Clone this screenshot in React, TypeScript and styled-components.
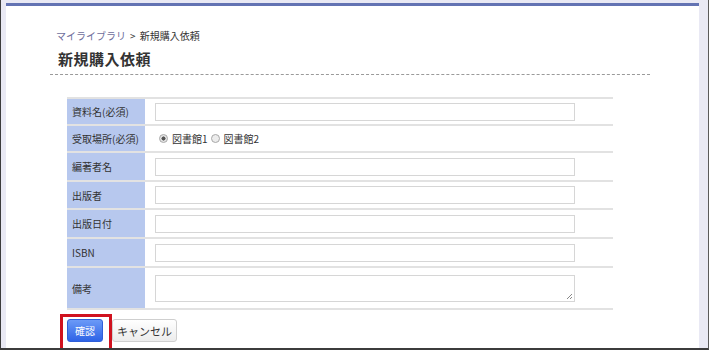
import styled, { createGlobalStyle } from "styled-components";

const GlobalStyle = createGlobalStyle`
  html, body {
    margin: 0;
    padding: 0;
    background: #ffffff;
  }
  body {
    font-family: "Noto Sans CJK JP", "Noto Sans", sans-serif;
    color: #333333;
  }
`;

const Frame = styled.div`
  width: 709px;
  height: 350px;
  box-sizing: border-box;
  border-left: 1px solid #3c3c3c;
  border-right: 1px solid #5a5a5a;
  border-bottom: 2px solid #3c3c3c;
  background: #e9e9f4;
  padding: 3px 9px 0 5px;
  overflow: hidden;
`;

const Panel = styled.div`
  height: 100%;
  box-sizing: border-box;
  background: #ffffff;
  border-top: 3px solid #6373b3;
  padding: 0 0 0 44px;
`;

const Header = styled.div`
  width: 600px;
  padding-top: 23px;
  border-bottom: 1px dashed #9a9a9a;
  padding-bottom: 5px;
`;

const Crumbs = styled.div`
  display: flex;
  align-items: center;
  gap: 4px;
  padding-left: 6px;
  font-size: 10px;
  line-height: 14px;
`;

const CrumbLink = styled.span`
  color: #6d6d9c;
`;

const CrumbCurrent = styled.span`
  color: #333333;
  word-spacing: 2px;
`;

const Title = styled.h1`
  margin: 6px 0 0 8px;
  font-size: 15px;
  font-weight: 700;
  line-height: 20px;
  letter-spacing: 0.5px;
  color: #333333;
`;

const FormTable = styled.div`
  margin: 22px 0 0 17px;
  width: 546px;
  border-top: 2px solid #e2e2e2;
`;

const Row = styled.div<{ $h: number }>`
  display: flex;
  height: ${(p) => p.$h}px;
  border-bottom: 2px solid #e2e2e2;
`;

const Label = styled.div`
  width: 78px;
  flex-shrink: 0;
  background: #b7c8ee;
  display: flex;
  align-items: center;
  padding-left: 5px;
  box-sizing: border-box;
  font-size: 10px;
  color: #333333;
  white-space: nowrap;
`;

const Cell = styled.div`
  flex: 1;
  display: flex;
  align-items: center;
  padding-left: 10px;
`;

const TextBox = styled.div`
  width: 420px;
  height: 18px;
  box-sizing: border-box;
  border: 1px solid #d6d6d6;
  background: #ffffff;
`;

const TextArea = styled.div`
  position: relative;
  width: 420px;
  height: 27px;
  box-sizing: border-box;
  border: 1px solid #d6d6d6;
  background: #ffffff;
`;

const Grip = styled.svg`
  position: absolute;
  right: 1px;
  bottom: 1px;
`;

const RadioGroup = styled.div`
  display: flex;
  align-items: center;
  gap: 3px;
  padding-left: 4px;
  font-size: 10px;
  color: #333333;
`;

const RadioDot = styled.span<{ $on?: boolean }>`
  width: 7px;
  height: 7px;
  border-radius: 50%;
  border: 1px solid #a8a8a8;
  background: ${(p) => (p.$on ? "radial-gradient(circle, #555 0 1.8px, #e6e6e6 2.3px)" : "#ececec")};
  display: inline-block;
  margin-right: 1px;
`;

const Actions = styled.div`
  display: flex;
  align-items: flex-start;
  margin: 4px 0 0 10px;
`;

const Highlight = styled.div`
  display: flex;
  align-items: flex-start;
  border: 3px solid #d0121f;
  border-bottom: none;
  padding: 2px 6px 0 4px;
  height: 36px;
  box-sizing: border-box;
`;

const Button = styled.button<{ $primary?: boolean }>`
  display: flex;
  align-items: center;
  justify-content: center;
  height: 23px;
  padding: 0;
  margin: 0;
  border-radius: 3px;
  white-space: nowrap;
  font-family: "Noto Sans CJK JP", sans-serif;
  font-size: ${(p) => (p.$primary ? 10 : 11)}px;
  cursor: pointer;
  border: 1px solid ${(p) => (p.$primary ? "#2f5fd8" : "#cfcfcf")};
  color: ${(p) => (p.$primary ? "#ffffff" : "#333333")};
  background: ${(p) =>
    p.$primary
      ? "linear-gradient(#6b9af7, #2e63e6)"
      : "linear-gradient(#ffffff, #ececec)"};
`;

const ConfirmButton = styled(Button)`
  width: 36px;
`;

const CancelButton = styled(Button)`
  margin-top: 5px;
  width: 65px;
`;

const fields: { label: string; h: number; kind: "text" | "radio" | "area" }[] = [
  { label: "資料名(必須)", h: 25, kind: "text" },
  { label: "受取場所(必須)", h: 25, kind: "radio" },
  { label: "編著者名", h: 27, kind: "text" },
  { label: "出版者", h: 26, kind: "text" },
  { label: "出版日付", h: 27, kind: "text" },
  { label: "ISBN", h: 27, kind: "text" },
  { label: "備考", h: 40, kind: "area" },
];

export default function App() {
  return (
    <>
      <GlobalStyle />
      <Frame>
        <Panel>
          <Header>
            <Crumbs>
              <CrumbLink>マイライブラリ</CrumbLink>
              <CrumbCurrent>&gt; 新規購入依頼</CrumbCurrent>
            </Crumbs>
            <Title>新規購入依頼</Title>
          </Header>
          <FormTable>
            {fields.map((f) => (
              <Row key={f.label} $h={f.h}>
                <Label>{f.label}</Label>
                <Cell>
                  {f.kind === "text" && <TextBox />}
                  {f.kind === "radio" && (
                    <RadioGroup>
                      <RadioDot $on />
                      <span>図書館1</span>
                      <RadioDot />
                      <span>図書館2</span>
                    </RadioGroup>
                  )}
                  {f.kind === "area" && (
                    <TextArea>
                      <Grip width="7" height="7" viewBox="0 0 7 7">
                        <path d="M6 1 L1 6 M6 4 L4 6" stroke="#888" strokeWidth="1" />
                      </Grip>
                    </TextArea>
                  )}
                </Cell>
              </Row>
            ))}
          </FormTable>
          <Actions>
            <Highlight>
              <ConfirmButton $primary>確認</ConfirmButton>
            </Highlight>
            <CancelButton>キャンセル</CancelButton>
          </Actions>
        </Panel>
      </Frame>
    </>
  );
}
